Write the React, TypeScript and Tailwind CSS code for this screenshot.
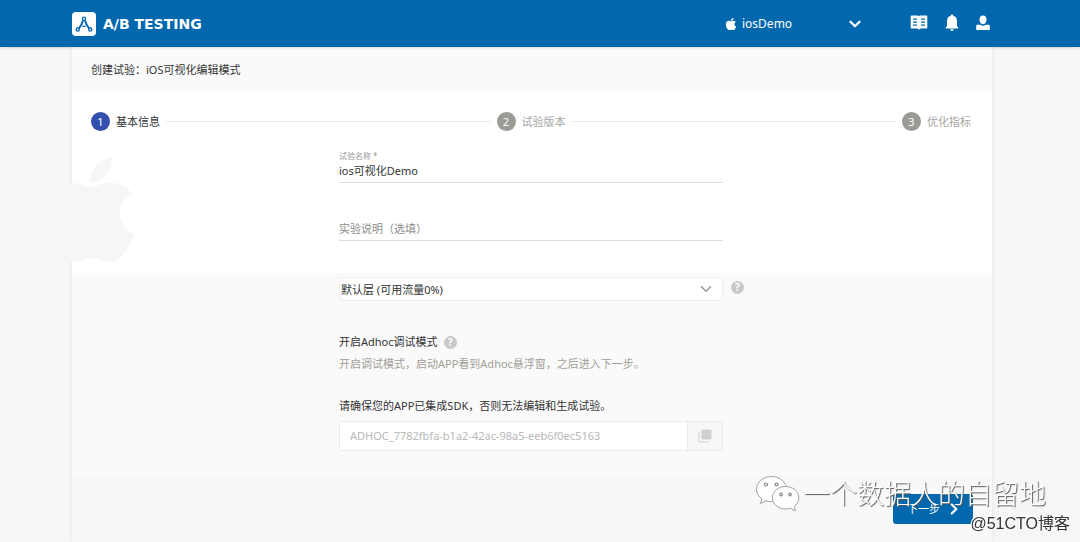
import React, { useState } from "react";
import { FaApple } from "react-icons/fa";
import { ChevronDown, ChevronRight } from "lucide-react";

const steps = [
  { id: 1, title: "基本信息" },
  { id: 2, title: "试验版本" },
  { id: 3, title: "优化指标" },
];

function LogoMark() {
  return (
    <svg viewBox="0 0 24 24" className="w-6 h-6" aria-hidden="true">
      <rect width="24" height="24" rx="4" fill="#fff" />
      <g fill="none" stroke="#0568ad" strokeWidth="1.3">
        <circle cx="12" cy="6.8" r="1.6" />
        <circle cx="5.8" cy="17.6" r="1.6" />
        <circle cx="18.2" cy="17.6" r="1.6" />
        <path d="M11 8.400c-.6 3.400-2 5.800-4.200 8M13 8.400c.6 3.400 2 5.800 4.200 8" strokeWidth="2" />
        <path d="M10.500 14.400h3" />
      </g>
    </svg>
  );
}

function BookIcon() {
  return (
    <svg viewBox="0 0 18 16" className="w-[18px] h-4" aria-hidden="true">
      <path d="M1.500 .5h6.500L9 1.200l1-.7h6.500a.8.8 0 0 1 .8.8v11.400a.8.8 0 0 1-.8.8h-6L9 14.800 7.500 13.500h-6a.8.8 0 0 1-.8-.8V1.300a.8.8 0 0 1 .8-.8z" fill="#fff" />
      <path d="M3 4.200h4M3 7.200h4M3 10.200h4M11 4.200h4M11 7.200h4M11 10.200h4" stroke="#0568ad" strokeWidth="1.300" />
    </svg>
  );
}

function BellIcon() {
  return (
    <svg viewBox="0 0 14 18" className="w-3.5 h-[18px]" fill="#fff" aria-hidden="true">
      <path d="M7 0.500c.8 0 1.200.5 1.200 1.300C10.800 2.400 12 4.400 12 7v5l1.300 1.500v1H.7v-1L2 12V7c0-2.600 1.200-4.600 3.800-5.200C5.800 1 6.200.5 7 .5z" />
      <path d="M5.200 15.300h3.600c-.2 1-.9 1.600-1.800 1.600s-1.600-.6-1.800-1.600z" />
    </svg>
  );
}

function UserIcon() {
  return (
    <svg viewBox="0 0 14 16" className="w-3.5 h-4" fill="#fff" aria-hidden="true">
      <path d="M7 .5c2.200 0 3.500 1.600 3.500 4.100 0 2.100-1.200 4.700-3.500 4.700S3.500 6.700 3.500 4.600C3.500 2.100 4.800.5 7 .5z" />
      <path d="M.2 15v-4c0-.7.6-1.200 1.400-1.200h2.600c1.600 1.400 4 1.400 5.600 0h2.600c.8 0 1.400.5 1.400 1.200v4z" />
    </svg>
  );
}

function CopyIcon() {
  return (
    <svg viewBox="0 0 14 14" className="w-3.5 h-3.5" aria-hidden="true">
      <rect x="3.500" y="0.500" width="10" height="10" rx="1" fill="#cfcfcf" />
      <path d="M1 2.500v9.500a1 1 0 0 0 1 1h9.500" fill="none" stroke="#d4d4d4" strokeWidth="1.200" />
    </svg>
  );
}

function WechatMark() {
  return (
    <svg viewBox="0 0 46 38" className="w-[46px] h-[38px]" aria-hidden="true">
      <g fill="#fff" stroke="#a0a0a0" strokeWidth="1">
        <path d="M16.500 1.500C8 1.500 1.500 7.200 1.500 14.200c0 4 2.100 7.500 5.500 9.800l-1.600 4.600 5.400-2.800c1.900.5 3.700.8 5.700.8 8.500 0 15-5.500 15-12.400S25 1.500 16.500 1.500z" />
        <path d="M30.500 11.500c-7.400 0-13.200 5-13.200 11.200S23.100 34 30.500 34c1.700 0 3.200-.3 4.700-.8l5.300 2.600-1.300-4.200c2.800-2.100 4.600-5.100 4.600-8.900 0-6.200-5.900-11.200-13.300-11.200z" />
      </g>
      <g fill="#fff" stroke="#888" strokeWidth="1.200">
        <circle cx="11" cy="9.500" r="1.500" />
        <circle cx="21.500" cy="9.500" r="1.500" />
        <circle cx="26" cy="19.500" r="1.300" />
        <circle cx="35" cy="19.500" r="1.300" />
      </g>
    </svg>
  );
}

function HelpButton({ label }: { label: string }) {
  return (
    <button
      type="button"
      aria-label={label}
      className="w-[13px] h-[13px] shrink-0 rounded-full bg-[#c9c9c7] text-white text-[10px] leading-[13px] font-bold text-center"
    >
      ?
    </button>
  );
}

function TopBar() {
  return (
    <header className="relative z-10 bg-[#0268ad] pr-4 shadow-sm">
      <div className="max-w-[920px] h-[47px] mx-auto flex items-center text-white">
        <a href="#" className="flex items-center gap-[7px]">
          <LogoMark />
          <span className="font-['DejaVu_Sans',sans-serif] text-[14px] leading-5 font-bold">A/B TESTING</span>
        </a>
        <button type="button" className="ml-auto w-[140px] flex items-center">
          <FaApple className="w-3.5 h-3.5" />
          <span className="ml-1 text-[12px] leading-4">iosDemo</span>
          <ChevronDown className="ml-auto w-[18px] h-[18px]" strokeWidth={3} />
        </button>
        <nav className="ml-[46px] mr-0.5 pb-0.5 flex items-center gap-[17px]">
          <a href="#" aria-label="文档"><BookIcon /></a>
          <a href="#" aria-label="通知"><BellIcon /></a>
          <a href="#" aria-label="账户"><UserIcon /></a>
        </nav>
      </div>
    </header>
  );
}

function Stepper({ current }: { current: number }) {
  return (
    <ol className="flex items-center gap-1.5 px-[19px] pt-5">
      {steps.map((step, index) => (
        <React.Fragment key={step.id}>
          {index > 0 && <li aria-hidden="true" className="flex-1 h-px bg-[#ebebeb]"></li>}
          <li className={`flex items-center gap-1.5 ${step.id === current ? "text-[#333]" : "text-[#a6a6a4]"}`}>
            <span
              className={`w-[19px] h-[19px] rounded-full text-white text-center leading-[19px] ${
                step.id === current ? "bg-[#3450ae]" : "bg-[#9b9b95]"
              }`}
            >
              {step.id}
            </span>
            <span>{step.title}</span>
          </li>
        </React.Fragment>
      ))}
    </ol>
  );
}

export default function App() {
  const [name, setName] = useState("ios可视化Demo");
  const [desc, setDesc] = useState("");

  return (
    <div className="min-h-screen flex flex-col bg-[#f6f6f6] text-[11px] leading-4 text-[#333] font-['Noto_Sans','Noto_Sans_CJK_SC',sans-serif]">
      <TopBar />

      <div className="flex-1 flex pr-4">
        <main className="relative w-full max-w-[920px] mx-auto flex flex-col bg-[#f8f8f8] shadow-[0_0_5px_rgba(0,0,0,0.08)]">
          <h1 className="px-[19px] pt-[15px] pb-3.5 bg-[#fafafa]">创建试验：iOS可视化编辑模式</h1>

          {/* Step 1: basic info */}
          <section className="relative bg-white h-[181px] pr-0.5">
            <div className="absolute top-[58px] -left-1 w-[67px] h-[120px] overflow-hidden flex justify-end">
              <FaApple className="shrink-0 w-[90px] h-[120px] text-[#f6f6f6]" />
            </div>
            <Stepper current={1} />
            <div className="relative w-[384px] mx-auto mt-[19px]">
              <label htmlFor="exp-name" className="block text-[8px] leading-3 text-[#999]">试验名称 *</label>
              <input
                id="exp-name"
                value={name}
                onChange={(e) => setName(e.target.value)}
                className="block w-full h-[21px] pb-1 border-b border-[#ddd] bg-transparent outline-none"
              />
              <input
                aria-label="实验说明（选填）"
                placeholder="实验说明（选填）"
                value={desc}
                onChange={(e) => setDesc(e.target.value)}
                className="block w-full h-[21px] mt-[37px] pb-1 border-b border-[#ddd] bg-transparent outline-none placeholder:text-[#8c8c8c]"
              />
            </div>
          </section>

          <section className="bg-[#fafafa] pt-1 pb-6 pr-0.5">
            <div className="w-[384px] mx-auto">
              <div className="relative flex items-center">
                <select
                  aria-label="流量层"
                  className="w-full h-6 pt-0.5 pl-px appearance-none bg-white border border-[#eee] rounded-sm outline-none"
                >
                  <option>默认层 (可用流量0%)</option>
                </select>
                <ChevronDown className="absolute right-2 w-[18px] h-[18px] text-[#999] pointer-events-none" strokeWidth={2} />
                <div className="absolute left-full ml-2 flex pb-1">
                  <HelpButton label="流量层说明" />
                </div>
              </div>

              <div className="mt-[33px] flex items-center gap-1.5">
                <span>开启Adhoc调试模式</span>
                <HelpButton label="调试模式说明" />
              </div>
              <p className="mt-1.5 text-[#a0a096]">开启调试模式，启动APP看到Adhoc悬浮窗，之后进入下一步。</p>

              <label htmlFor="sdk-key" className="block mt-[26px]">请确保您的APP已集成SDK，否则无法编辑和生成试验。</label>
              <div className="mt-[7px] flex h-[30px] border border-[#ebebeb] rounded-sm overflow-hidden">
                <input
                  id="sdk-key"
                  readOnly
                  value="ADHOC_7782fbfa-b1a2-42ac-98a5-eeb6f0ec5163"
                  className="flex-1 min-w-0 px-2.5 bg-white text-[#b8b8b8] outline-none"
                />
                <button
                  type="button"
                  aria-label="复制"
                  className="w-[35px] flex items-center justify-center border-l border-[#ebebeb] bg-[#f7f7f6]"
                >
                  <CopyIcon />
                </button>
              </div>
            </div>
          </section>

          <footer className="flex justify-end px-[19px] pt-[19px] pb-[17px]">
            <button
              type="button"
              className="w-20 h-[30px] pl-3.5 pr-2.5 flex items-center justify-between bg-[#0268ad] text-white rounded-[3px]"
            >
              下一步
              <ChevronRight className="w-[18px] h-[18px]" strokeWidth={3} />
            </button>
          </footer>
        </main>
      </div>

      {/* Watermarks */}
      <div className="fixed right-[34px] bottom-7 flex items-center gap-0.5 pointer-events-none">
        <WechatMark />
        <span className="font-light text-[27px] leading-10 text-white [text-shadow:1px_1px_1px_#555]">一个数据人的自留地</span>
      </div>
      <div className="fixed right-2.5 bottom-1.5 pointer-events-none text-[16px] leading-6 text-[#333] font-['Liberation_Sans','Noto_Sans_CJK_SC',sans-serif] [text-shadow:-1px_-1px_0_#fff]">
        @51CTO博客
      </div>
    </div>
  );
}
